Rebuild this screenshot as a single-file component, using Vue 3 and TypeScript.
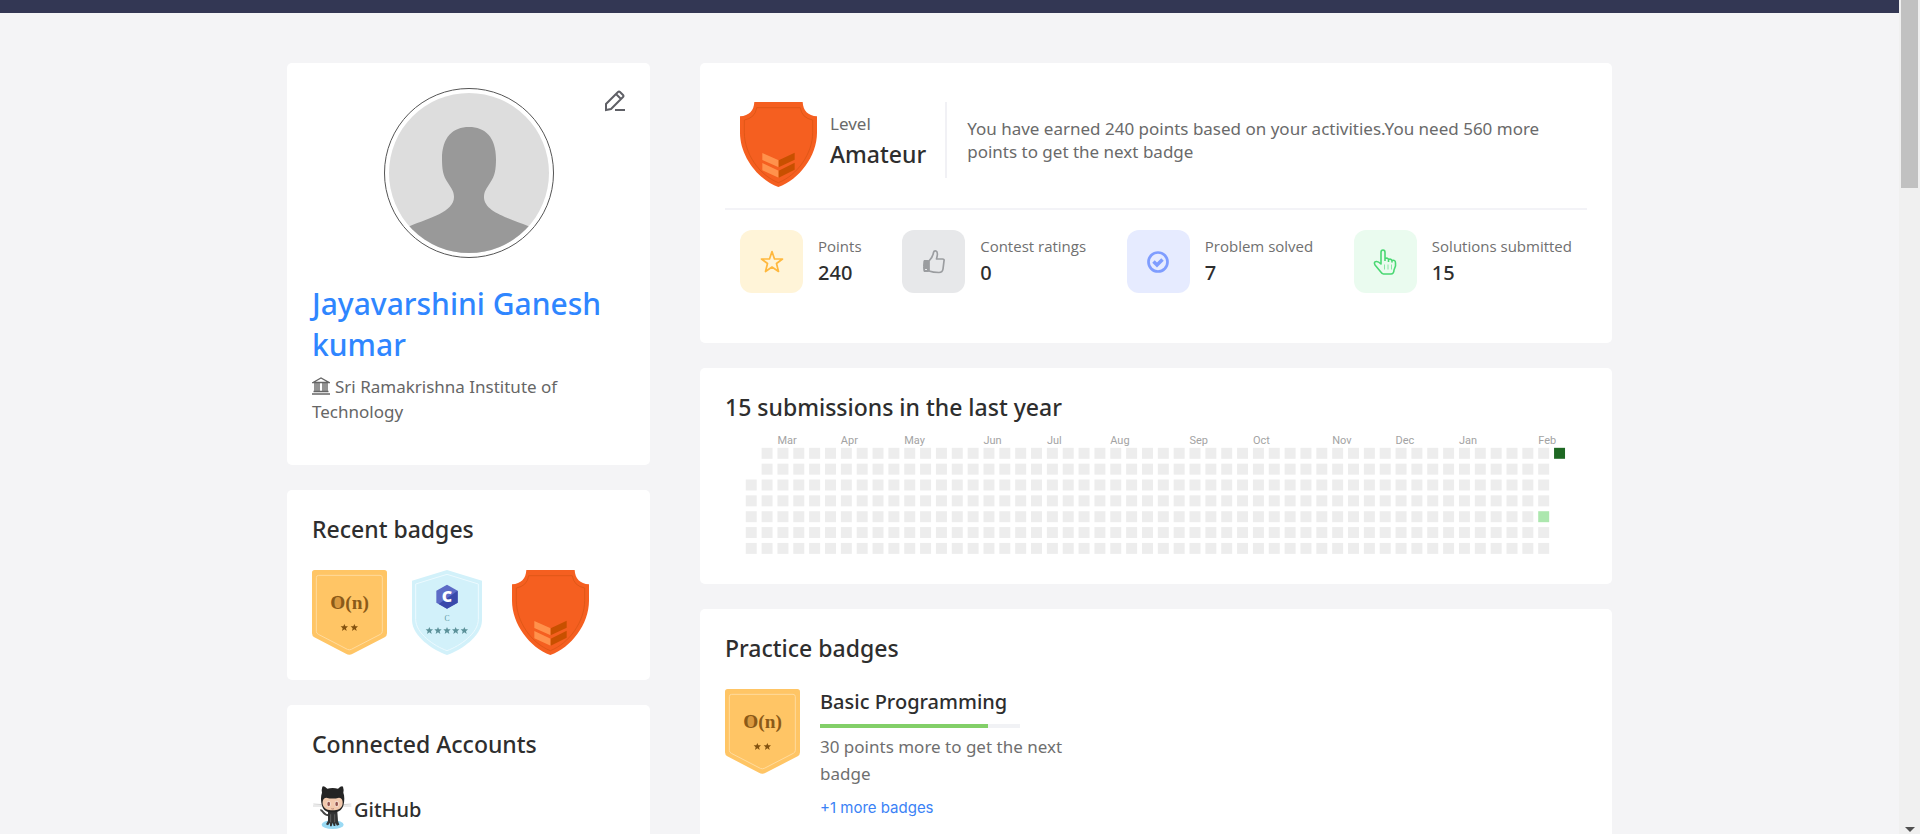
<script setup lang="ts">
import { h, ref } from 'vue'
import type { VNode } from 'vue'

type Badge = 'complexity' | 'language' | 'level'
type StatIcon = 'star' | 'thumb' | 'check' | 'hand'

interface Stat {
  icon: StatIcon
  label: string
  value: number
}

interface Day {
  key: string
  x: number
  y: number
  level: string
}

const recentBadges: Badge[] = ['complexity', 'language', 'level']

const stats: Stat[] = [
  { icon: 'star', label: 'Points', value: 240 },
  { icon: 'thumb', label: 'Contest ratings', value: 0 },
  { icon: 'check', label: 'Problem solved', value: 7 },
  { icon: 'hand', label: 'Solutions submitted', value: 15 },
]

const months: { name: string; week: number }[] = [
  { name: 'Mar', week: 2 },
  { name: 'Apr', week: 6 },
  { name: 'May', week: 10 },
  { name: 'Jun', week: 15 },
  { name: 'Jul', week: 19 },
  { name: 'Aug', week: 23 },
  { name: 'Sep', week: 28 },
  { name: 'Oct', week: 32 },
  { name: 'Nov', week: 37 },
  { name: 'Dec', week: 41 },
  { name: 'Jan', week: 45 },
  { name: 'Feb', week: 50 },
]

const weekX = (week: number): number => 17 + week * 13

const days: Day[] = []
for (let week = 0; week < 52; week++) {
  for (let day = 0; day < 7; day++) {
    if ((week === 0 && day < 2) || (week === 51 && day > 0)) continue
    const level = week === 51 ? 'high' : week === 50 && day === 4 ? 'low' : 'none'
    days.push({ key: `${week}-${day}`, x: weekX(week), y: 22 + day * 13, level })
  }
}

const progress = ref(84)

const shape = (d: string, fill: string): VNode => h('path', { d, fill })
const outline = (d: string, stroke: string): VNode =>
  h('path', { d, stroke, fill: 'none', 'stroke-width': 3 })
const star = (x: number, y: number, fill: string): VNode =>
  h('path', {
    d: 'M0-11 3-4 11-4 5 2 7 10 0 5-7 10-5 2-11-4-3-4Z',
    transform: `translate(${x} ${y})`,
    fill,
  })
const label = (text: string, x: number, y: number, size: number, fill: string, family: string, weight: number): VNode =>
  h('text', { x, y, fill, 'text-anchor': 'middle', 'font-size': size, 'font-family': family, 'font-weight': weight }, text)

const serif = 'Liberation Serif, serif'

const art: Record<Badge, { width: number; draw: () => VNode[] }> = {
  complexity: {
    width: 225,
    draw: () => [
      shape('M8 0H217Q225 0 225 8V190Q225 198 218 202L122 251Q112 257 102 251L7 202Q0 198 0 190V8Q0 0 8 0Z', '#ffc565'),
      outline('M20 16H204Q211 16 211 23V184Q211 190 205 193L118 238Q112 241 106 238L19 193Q13 190 13 184V23Q13 16 20 16Z', '#ffdb9d'),
      h('ellipse', { cx: 77, cy: 96, rx: 18, ry: 19, fill: '#d9993f' }),
      label('O(n)', 113, 116, 58, '#8b5a18', serif, 700),
      star(97, 173, '#83520f'),
      star(127, 173, '#83520f'),
    ],
  },
  language: {
    width: 210,
    draw: () => [
      shape('M105 0 210 32V150C210 198 148 240 105 255 62 240 0 198 0 150V32Z', '#d2f1fa'),
      outline('M105 13 199 42V148C199 190 144 228 105 242 66 228 11 190 11 148V42Z', '#ecfaff'),
      shape('M105 44 137 62V98L105 116 73 98V62Z', '#5c6bc6'),
      shape('M137 62V98L105 116 80 102Z', '#3949ab'),
      label('C', 105, 97, 48, '#ffffff', 'Open Sans, sans-serif', 800),
      label('C', 105, 154, 23, '#5b9aa4', serif, 400),
      ...[52, 78, 105, 131, 157].map((x) => star(x, 182, '#5b9199')),
    ],
  },
  level: {
    width: 231,
    draw: () => [
      shape('M43 0H188Q190 40 231 43V92C231 162 178 232 115 255 53 232 0 162 0 92V43Q41 40 43 0Z', '#f55f20'),
      outline('M50 17H181Q185 48 218 54V92C218 154 172 220 115 242 58 220 13 154 13 92V54Q46 48 50 17Z', '#e05717'),
      shape('M67 153 116 175V196L67 174ZM67 183 116 206V227L67 205Z', '#ff924c'),
      shape('M116 175 164 152V173L116 196ZM116 206 164 182V203L116 227Z', '#c85000'),
    ],
  },
}

const BadgeArt = (props: { kind: Badge }): VNode =>
  h('svg', { viewBox: `0 0 ${art[props.kind].width} 255`, 'aria-hidden': 'true' }, art[props.kind].draw())
BadgeArt.props = ['kind']
</script>

<template>
  <div class="shell">
    <div class="page">
      <header class="topbar"></header>
      <main class="columns">
        <aside class="column">
          <section class="card profile">
            <button class="edit" type="button" aria-label="Edit profile">
              <svg viewBox="0 0 22 22" width="22" height="22" fill="none" stroke="#5f6066" stroke-width="2">
                <path d="M2 20V14L14 2Q15 1 16 2L19 5Q20 6 19 7L7 19 2 20ZM12 4 17 9M11 20H21" />
              </svg>
            </button>
            <div class="avatar">
              <svg viewBox="0 0 160 160" role="img" aria-label="Profile picture">
                <rect width="160" height="160" fill="#ddd" />
                <path fill="#999" d="M80 34C64 34 53 44 53 66 53 76 54 83 59 90 62 95 65 98 65 104 65 119 40 125 21 133L0 142V160H160V142L139 133C120 125 95 119 95 104 95 98 98 95 101 90 106 83 107 76 107 66 107 44 96 34 80 34Z" />
              </svg>
            </div>
            <h1 class="name">Jayavarshini Ganesh kumar</h1>
            <p class="institute">
              <svg class="institute-icon" viewBox="0 0 18 18" width="18" height="18" fill="none" stroke="#666" aria-hidden="true">
                <path stroke-width="1.4" d="M1 5.5 9 1 17 5.5ZM3 6V14M7 6V14M11 6V14M15 6V14M5 6V14M13 6V14M1.5 14.5H16.5M0 17H18" />
              </svg>Sri Ramakrishna Institute of Technology
            </p>
          </section>

          <section class="card">
            <h2 class="heading">Recent badges</h2>
            <ul class="badges">
              <li v-for="badge in recentBadges" :key="badge">
                <BadgeArt class="badge" :kind="badge" />
              </li>
            </ul>
          </section>

          <section class="card">
            <h2 class="heading">Connected Accounts</h2>
            <div class="account">
              <svg viewBox="0 0 120 135" width="40" height="45" aria-hidden="true">
                <ellipse cx="62" cy="119" rx="33" ry="13" fill="#9adaf4" />
                <path d="M4 57 32 59M3 63 32 63M92 59 118 57M92 63 118 63" stroke="#d5d5d5" stroke-width="3" />
                <path d="M25 76C34 73 30 90 52 91" fill="none" stroke="#444" stroke-width="6" />
                <path fill="#333" d="M48 80H76L78 108 82 119 75 122 70 114V123H65L62 113 59 124H54V113L48 121 42 118 48 107Z" />
                <path stroke="#777" stroke-width="2" d="M56 88V112M68 88V112" />
                <path fill="#242424" d="M31 5Q34 1 46 11Q62 7 78 11Q89 1 93 5Q96 14 94 23C98 32 98 48 94 62 88 78 77 82 62 82 46 82 35 78 30 62 26 48 26 32 30 23Q28 14 31 5Z" />
                <path fill="#f2c9ad" d="M43 38Q62 43 81 38C91 38 94 50 91 61 87 72 77 76 62 76 47 76 37 72 33 61 30 50 33 38 43 38Z" />
                <ellipse cx="50" cy="57" rx="6" ry="9" fill="#f7e6dc" />
                <ellipse cx="74" cy="57" rx="6" ry="9" fill="#f7e6dc" />
                <ellipse cx="50" cy="57" rx="4" ry="7" fill="#94544d" />
                <ellipse cx="74" cy="57" rx="4" ry="7" fill="#94544d" />
                <path d="M58 71Q62 73 66 71" fill="none" stroke="#9b6558" stroke-width="2" />
              </svg>
              <span class="account-name">GitHub</span>
            </div>
          </section>
        </aside>

        <div class="column">
          <section class="card summary">
            <div class="level">
              <BadgeArt class="badge" kind="level" />
              <div class="level-name">
                <p>Level</p>
                <strong>Amateur</strong>
              </div>
              <p class="level-text">You have earned 240 points based on your activities.You need 560 more points to get the next badge</p>
            </div>
            <ul class="stats">
              <li v-for="stat in stats" :key="stat.icon" class="stat">
                <div :class="['tile', stat.icon]">
                  <svg viewBox="0 0 26 26" width="26" height="26" fill="none" stroke="currentColor" stroke-width="2" stroke-linejoin="round" aria-hidden="true">
                    <path v-if="stat.icon === 'star'" d="M13 2.500 15.500 10H23.500L17.500 14.500 19.500 22.500 13 18 6.500 22.500 8.500 14.500 2.500 10H10.500Z" stroke-width="1.700" />
                    <template v-else-if="stat.icon === 'thumb'">
                      <path d="M8 12C10 10 12 7 12.500 3.500Q13 1.500 15 2 17.500 3 15.500 10H21.500Q23.500 10 23 12L22 20Q21.500 23.500 18 23.500 12 23.500 8 22Z" stroke-width="1.700" />
                      <path d="M3 11.500H7.500V22.500H3Q2 18 3 11.500Z" fill="currentColor" stroke-width="1" />
                      <path d="M4 20.500H6" stroke="#e7e8ea" stroke-width="1" />
                    </template>
                    <template v-else-if="stat.icon === 'check'">
                      <circle cx="13" cy="13" r="9.500" stroke-width="2.700" />
                      <path d="M8.500 12.500 12 16 17.500 10.500" stroke-width="3.500" stroke-linejoin="miter" />
                    </template>
                    <template v-else>
                      <path d="M9 15V3.500Q9 1 11 1 13 1 13 3.500V9.500Q16 8.500 16.500 10.500 19 9.500 19.800 11.500 23.500 10.500 23.500 14V17L22 21Q21.800 25 19 25H11.500Q10 25 8 22L3 16Q1.500 13 4 12.500 6 12 9 15ZM13 9.500V12M16.500 10.500V13M20 11.500V13.500" stroke-width="1.600" />
                      <path d="M12.500 15.500V20.500M16 15.500V20.500M19.500 15.500V20.500" stroke-width="1" opacity="0.600" />
                    </template>
                  </svg>
                </div>
                <div>
                  <p class="stat-label">{{ stat.label }}</p>
                  <strong class="stat-value">{{ stat.value }}</strong>
                </div>
              </li>
            </ul>
          </section>

          <section class="card">
            <h2 class="heading calendar-heading">15 submissions in the last year</h2>
            <svg class="calendar" viewBox="0 0 707 113" role="img" aria-label="Submissions per day">
              <text v-for="month in months" :key="month.name" :x="weekX(month.week)" y="19">{{ month.name }}</text>
              <rect v-for="day in days" :key="day.key" :class="day.level" :x="day.x" :y="day.y" width="9" height="9" />
            </svg>
          </section>

          <section class="card">
            <h2 class="heading">Practice badges</h2>
            <div class="practice">
              <BadgeArt class="badge" kind="complexity" />
              <div class="practice-info">
                <h3 class="practice-title">Basic Programming</h3>
                <div class="bar" role="progressbar" aria-label="Basic Programming" :aria-valuenow="progress">
                  <div class="bar-fill" :style="{ width: progress + '%' }"></div>
                </div>
                <p class="practice-text">30 points more to get the next badge</p>
                <a class="more" href="#">+1 more badges</a>
              </div>
            </div>
          </section>
        </div>
      </main>
    </div>

    <div class="scroll-track" aria-hidden="true">
      <div class="scroll-thumb"></div>
      <div class="scroll-arrow"></div>
    </div>
  </div>
</template>

<style>
html,
body {
  margin: 0;
  background: #f4f4f6;
}
</style>

<style scoped>
.shell {
  display: flex;
  height: 100vh;
  overflow: hidden;
  font-family: "Noto Sans", "Open Sans", sans-serif;
  font-size: 17px;
  color: #2e2e2e;
}
h1,
h2,
h3,
p,
ul {
  margin: 0;
  padding: 0;
}
ul {
  list-style: none;
}
strong {
  display: block;
  font-weight: 500;
}
.page {
  flex: 1;
  min-width: 0;
}
.topbar {
  height: 13px;
  background: #333754;
}
.columns {
  display: grid;
  grid-template-columns: 363px minmax(0, 1fr);
  gap: 50px;
  max-width: 1325px;
  margin: 50px auto 0;
}
.column {
  display: flex;
  flex-direction: column;
  gap: 25px;
}
.card {
  padding: 25px;
  border-radius: 5px;
  background: #fff;
}
.heading {
  margin-bottom: 27px;
  font-size: 23px;
  font-weight: 500;
  line-height: 28px;
}

.profile {
  position: relative;
  padding-bottom: 41px;
}
.edit {
  position: absolute;
  top: 27px;
  right: 24px;
  padding: 0;
  border: 0;
  background: none;
  line-height: 0;
}
.avatar {
  box-sizing: border-box;
  width: 170px;
  height: 170px;
  margin: 0 auto;
  padding: 4px;
  border: 1px solid #555;
  border-radius: 50%;
}
.avatar svg {
  display: block;
  border-radius: 50%;
}
.name {
  margin: 25px 0 9px;
  font-size: 30px;
  font-weight: 500;
  line-height: 41px;
  color: #2f86ff;
}
.institute {
  line-height: 25px;
  color: #666;
}
.institute-icon {
  margin-right: 5px;
  vertical-align: -2px;
}

.badges {
  display: flex;
  gap: 25px;
}
.badges li {
  min-width: 75px;
}
.badge {
  display: block;
  flex: none;
  height: 85px;
}
.account {
  display: flex;
  align-items: center;
  gap: 2px;
}
.account-name {
  padding-top: 4px;
  font-size: 20px;
  font-weight: 500;
}

.summary {
  padding-bottom: 50px;
}
.level {
  display: flex;
  align-items: flex-start;
  padding: 14px 15px 21px;
  border-bottom: 2px solid #f3f3f7;
}
.level-name {
  box-sizing: border-box;
  height: 76px;
  padding: 9px 19px 0 13px;
  border-right: 2px solid #f1f1f5;
  line-height: 26px;
  color: #6a6a6a;
}
.level-name strong {
  font-size: 23px;
  line-height: 34px;
  color: #2e2e2e;
}
.level-text {
  padding: 15px 0 0 20px;
  line-height: 23px;
  color: #6a6a6a;
}
.stats {
  display: flex;
  flex-wrap: wrap;
  justify-content: space-between;
  padding: 20px 15px 0;
}
.stat {
  display: flex;
  gap: 15px;
}
.tile {
  display: flex;
  align-items: center;
  justify-content: center;
  width: 63px;
  height: 63px;
  border-radius: 12px;
}
.star {
  background: #fff4d8;
  color: #ffb83d;
}
.thumb {
  background: #e7e8ea;
  color: #9b9da0;
}
.check {
  background: #e6ebff;
  color: #7f9dff;
}
.hand {
  background: #eafbef;
  color: #4ad873;
}
.stat-label {
  padding-top: 4px;
  font-family: "Open Sans", sans-serif;
  font-size: 15px;
  line-height: 24px;
  color: #707070;
}
.stat-value {
  font-size: 20px;
  line-height: 29px;
}

.calendar-heading {
  margin-bottom: 0;
}
.calendar {
  display: block;
  width: 100%;
}
.calendar text {
  font-family: Roboto, sans-serif;
  font-size: 9px;
  fill: #a3a3a3;
}
.none {
  fill: #ededed;
}
.low {
  fill: #ace7ae;
}
.high {
  fill: #1e6823;
}

.practice {
  display: flex;
  gap: 20px;
}
.practice-info {
  max-width: 270px;
}
.practice-title {
  font-size: 20px;
  font-weight: 500;
  line-height: 25px;
}
.bar {
  width: 200px;
  height: 4px;
  margin: 10px 0 5px;
  background: #f1f2f5;
}
.bar-fill {
  height: 100%;
  background: #82cf68;
}
.practice-text {
  margin-bottom: 8px;
  line-height: 27px;
  color: #6f6f6f;
}
.more {
  font-family: Inter, sans-serif;
  font-size: 15px;
  line-height: 24px;
  color: #3b82f6;
  text-decoration: none;
}

.scroll-track {
  display: flex;
  flex-direction: column;
  align-items: center;
  justify-content: space-between;
  width: 21px;
  background: #f0f0f0;
}
.scroll-thumb {
  width: 17px;
  height: 188px;
  background: #c1c1c1;
}
.scroll-arrow {
  margin-bottom: 2px;
  border: 5px solid transparent;
  border-top-color: #505050;
  border-bottom: 0;
}
</style>
